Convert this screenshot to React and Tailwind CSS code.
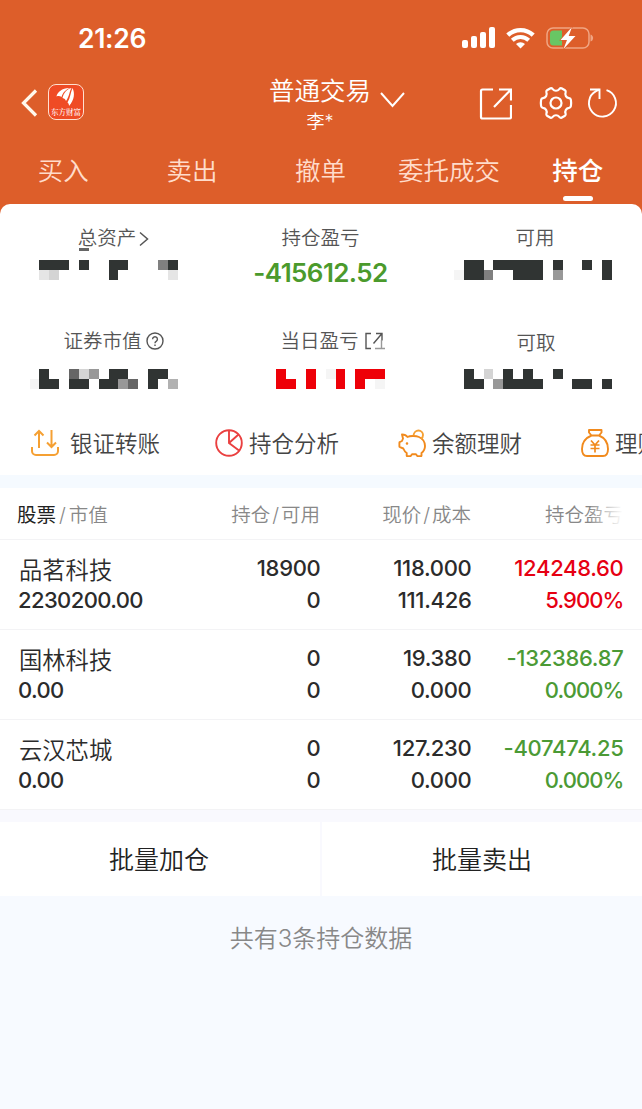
import React from 'react'

const CELL = 9.87

const SHADES = {
  '#': '#303433',
  R: '#ee0008',
  a: '#f5f5f5',
  b: '#e5e5e5',
  c: '#d4d4d4',
  d: '#b1b1b1',
  e: '#989898',
  f: '#808080',
  g: '#666666',
}

const cellX = (k) => Math.round(k * CELL)

// hidden amounts, drawn as two rows of blocks starting at grid column `start`
const Mosaic = ({ start, rows, className }) => {
  const left = cellX(start)
  const cells = []
  rows.forEach((row, y) => {
    row.split('').forEach((ch, i) => {
      if (SHADES[ch]) {
        const x = cellX(start + i)
        cells.push(
          <rect
            key={`${y}-${i}`}
            x={x - left}
            y={y * 10}
            width={cellX(start + i + 1) - x}
            height="10"
            fill={SHADES[ch]}
          />
        )
      }
    })
  })
  return (
    <svg width="160" height="20" shapeRendering="crispEdges" className={`block shrink-0 ${className}`}>
      {cells}
    </svg>
  )
}

const StatusBar = () => (
  <div className="flex h-[76px] items-center justify-between pl-[78px] pr-[48px] text-white">
    <span className="pt-px text-[26.500px] leading-none font-semibold tracking-[-0.3px]">21:26</span>
    <div className="flex items-center">
      <svg width="34" height="22" viewBox="0 0 34 22" fill="#fff">
        <rect x="0" y="13" width="6" height="8" rx="2" />
        <rect x="9" y="9" width="6" height="12" rx="2" />
        <rect x="18" y="5" width="6" height="16" rx="2" />
        <rect x="27" y="0" width="6" height="21" rx="2" />
      </svg>
      <svg width="30" height="22" viewBox="0 0 30 22" fill="none" stroke="#fff" strokeWidth="4.400" className="ml-[10px]">
        <path d="M1.800 8.200a18.300 18.300 0 0 1 25.400 0" />
        <path d="M6.300 13.200a11.800 11.800 0 0 1 16.400 0" strokeWidth="4" />
        <path d="M14.500 21.500l-4.500-4.400a6.400 6.400 0 0 1 9 0z" fill="#fff" stroke="none" />
      </svg>
      <svg width="48" height="22" viewBox="0 0 48 22" className="ml-[10px]">
        <rect x="1" y="1" width="42" height="20" rx="6" fill="none" stroke="#f0a583" strokeWidth="1.500" />
        <path d="M44.500 7.500c3.500 1 3.500 6 0 7z" fill="#f0a583" />
        <path d="M7.500 3.500h8.500v15H7.500a3.500 3.500 0 0 1-3.500-3.500V7a3.500 3.500 0 0 1 3.500-3.500z" fill="#68c664" />
        <path d="M26 0L14.500 13h6.500L17.500 22 29.500 9h-6.800z" fill="#fff" stroke="#dd5e2a" strokeWidth="1.200" paintOrder="stroke" />
      </svg>
    </div>
  </div>
)

const NavBar = () => (
  <div className="grid h-[64px] grid-cols-[239px_162px_1fr] text-white">
    <div className="flex items-start pl-[21px] pt-[8px]">
      <svg width="17" height="28" viewBox="0 0 17 28" fill="none" stroke="#fff8ec" strokeWidth="3.200" className="mt-[5px]">
        <path d="M15 1.500L2.500 14 15 26.500" />
      </svg>
      <div className="ml-[10px] flex size-[36px] flex-col items-center rounded-[8px] border border-[#ffe0d0] bg-[#ef4b25]">
        <svg width="22" height="20" viewBox="0 0 22 20" fill="#fff" className="mt-[2px]">
          <path d="M1.500 9.500C2 5 8 .5 15 1c-4 1.500-7 4-8.500 9-1.500-1-3-1.200-5-.5z" />
          <path d="M7.500 11C8.500 6 12 2 16.500 1c-2 3-2 8-5.500 13-.5-1.600-1.500-2.500-3.500-3z" />
          <path d="M12.500 15.500c3-5 3-10 5-14.500C20 6 19.500 13 14 19c0-1.500-.3-2.500-1.500-3.500z" />
        </svg>
        <span className="font-['Noto_Serif_CJK_SC','Noto_Sans_CJK_SC',serif] text-[7.500px] leading-[10px] font-medium whitespace-nowrap">东方财富</span>
      </div>
    </div>
    <div className="flex flex-col items-center">
      <div className="relative text-[25.500px] leading-[30px] font-[350] whitespace-nowrap">
        普通交易
        <svg width="25" height="16" viewBox="0 0 25 16" fill="none" stroke="#fff" strokeWidth="2" className="absolute top-[16px] left-[111px]">
          <path d="M1 1l11.500 13L24 1" />
        </svg>
      </div>
      <div className="text-[18px] leading-[32px] font-[350]">李*</div>
    </div>
    <div className="flex items-start pl-[77px] pt-[10px]">
      <svg width="34" height="34" viewBox="0 0 34 34" fill="none" stroke="#fff" strokeWidth="2.200">
        <path d="M15 3.500H4.500A1.500 1.500 0 0 0 3 5v26a1.500 1.500 0 0 0 1.500 1.500h27A1.500 1.500 0 0 0 33 31V19M21 3.500h12v11M32.500 4L16 21" />
      </svg>
      <svg width="34" height="34" viewBox="0 0 34 34" fill="none" stroke="#fff" strokeWidth="2.200" strokeLinejoin="round" className="ml-[27px]">
        <path d="M11.500 2.200c1-.4 1.500 0 2.200.9 1.700 2.200 4.900 2.200 6.600 0 .7-.9 1.200-1.300 2.200-.9l3.500 2c.9.500.9 1.200.6 2.200-1 2.700.6 5.400 3.400 5.800 1.100.2 1.700.6 1.900 1.700.3 1.800.3 4.400 0 6.200-.2 1.100-.8 1.500-1.900 1.700-2.800.4-4.400 3.100-3.400 5.800.3 1 .3 1.700-.6 2.200l-3.500 2c-1 .4-1.500 0-2.200-.9-1.700-2.200-4.900-2.200-6.600 0-.7.9-1.200 1.300-2.200.9l-3.500-2c-.9-.5-.9-1.200-.6-2.200 1-2.700-.6-5.400-3.400-5.800-1.100-.2-1.700-.6-1.900-1.700-.3-1.800-.3-4.400 0-6.200.2-1.100.8-1.500 1.900-1.700 2.800-.4 4.400-3.100 3.400-5.800-.3-1-.3-1.700.6-2.200z" />
        <circle cx="17" cy="17" r="5.500" />
      </svg>
      <svg width="32" height="34" viewBox="0 0 32 34" fill="none" stroke="#fff" strokeWidth="1.900" className="ml-[14px]">
        <path d="M19.500 4.200A13.500 13.500 0 1 1 9 5.200l3-1.500" />
        <path d="M3 3.500h9.500v9.500" />
      </svg>
    </div>
  </div>
)

const tabs = ['买入', '卖出', '撤单', '委托成交', '持仓']

const Tabs = () => (
  <div className="-ml-px grid h-[64px] grid-cols-5 text-[25.500px] leading-[61px] text-[#ffdccb]">
    {tabs.map((tab) =>
      tab === '持仓' ? (
        <div key={tab} className="relative text-center font-medium text-white">
          {tab}
          <span className="absolute top-[56px] left-1/2 h-[5px] w-[30px] -translate-x-1/2 rounded-full bg-white" />
        </div>
      ) : (
        <div key={tab} className="text-center font-[350] whitespace-nowrap">{tab}</div>
      )
    )}
  </div>
)

const label = 'flex h-[28px] items-center justify-center text-[19.500px] font-[350] text-[#555]'

const Summary = () => (
  <div className="grid h-[204px] grid-cols-[227px_186px_229px] grid-rows-[109px_94px] pt-[21px]">
    <div>
      <div className={label}>
        <span className="relative">
          总资产
          <span className="absolute top-[24px] left-px h-[3px] w-[10px] bg-[#666]" />
        </span>
        <svg width="10" height="16" viewBox="0 0 10 16" fill="none" stroke="#555" strokeWidth="1.500" className="ml-[3px]">
          <path d="M1 1.500L8.500 8 1 14.500" />
        </svg>
      </div>
      <Mosaic start={4} rows={['### #  ##   f#', 'bc     #     b']} className="mt-[7px] ml-[39px]" />
    </div>
    <div>
      <div className={`${label} pl-px`}>持仓盈亏</div>
      <div className="mt-[6px] pl-px text-center text-[26px] leading-[28px] font-semibold tracking-[-0.6px] whitespace-nowrap text-[#4b9a2c]">-415612.52</div>
    </div>
    <div>
      <div className={`${label} pl-[15px]`}>可用</div>
      <Mosaic start={46} rows={[' ## ##### #  # #', 'a##f  ### e    #']} className="mt-[7px] ml-[41px]" />
    </div>
    <div className="-mt-[6px]">
      <div className={label}>
        证券市值
        <svg width="18" height="18" viewBox="0 0 18 18" fill="none" stroke="#555" strokeWidth="1.400" className="-mt-[2px] ml-[4px]">
          <circle cx="9" cy="9" r="8" />
          <path d="M6.600 7.200a2.400 2.400 0 1 1 3.600 2.100c-.8.500-1.200.9-1.200 1.900M9 12.500v1.500" />
        </svg>
      </div>
      <Mosaic start={3} rows={[' #  gce ##  ##', 'a## ## ##eg # d']} className="mt-[13px] ml-[30px]" />
    </div>
    <div className="-mt-[6px]">
      <div className={`${label} pl-[25px]`}>
        当日盈亏
        <svg width="20" height="18" viewBox="0 0 20 18" fill="none" stroke="#555" strokeWidth="1.400" className="-mt-[2px] ml-[6px]">
          <path d="M6 1.500H1v15h5M11 1.500h6v7M17 1.500L8.500 11.500" />
          <path d="M10 16.500h10M16.500 8v8" stroke="#999" />
        </svg>
      </div>
      <Mosaic start={28} rows={['R  R aR RRR', 'RR R  R R a']} className="mt-[13px] ml-[49px]" />
    </div>
    <div className="-mt-[6px]">
      <div className={`${label} relative top-[2px] pl-[17px]`}>可取</div>
      <Mosaic start={47} rows={['# c # #  #', '## e####   ## #']} className="mt-[13px] ml-[51px]" />
    </div>
  </div>
)

const TransferIcon = () => (
  <svg width="28" height="28" viewBox="0 0 28 28" fill="none" stroke="#f5a033" strokeWidth="2" className="shrink-0">
    <path d="M1 18v4a4 4 0 0 0 4 4h18a4 4 0 0 0 4-4v-4M8 19V2M3.500 6.500L8 2l4.500 4.500M20.500 1v17M16 13.500l4.500 4.500 4.500-4.500" />
  </svg>
)

const PieIcon = () => (
  <svg width="28" height="28" viewBox="0 0 28 28" fill="none" stroke="#ea4040" strokeWidth="1.900" className="shrink-0">
    <circle cx="14" cy="14" r="12.800" />
    <path d="M14 1v13l10 7.500M14 14l9.500-8.500" />
  </svg>
)

const PiggyIcon = () => (
  <svg width="28" height="28" viewBox="0 0 28 28" fill="none" stroke="#f18a1d" strokeWidth="1.900" strokeLinejoin="round" className="shrink-0">
    <path d="M4 5.500c2.500 0 4.500 1 5.500 2.500 2-1 8-1.500 11.500 0 3.800 1.700 6 5 6 9 0 3-1.500 5.500-3.500 7v2.500a.8.800 0 0 1-.8.800h-3.200l-1.500-2h-4l-1.500 2H9.500a.8.800 0 0 1-.8-.8V24c-1.700-1.200-2.700-2.700-3.400-4.500L2 18.200a.8.800 0 0 1-.6-.8v-3.600c0-.4.200-.7.600-.8L4 12l1-2.500z" />
    <path d="M15.500 6.500c.3-3 2.500-5 5-5s4.500 2 4.500 4.500c0 1.500-.7 3-2 4" stroke="#f5a033" />
    <circle cx="9" cy="14.500" r=".7" fill="#f18a1d" strokeWidth="1.200" />
  </svg>
)

const BagIcon = () => (
  <svg width="28" height="28" viewBox="0 0 28 28" fill="none" stroke="#f18a1d" strokeWidth="1.900" strokeLinejoin="round" className="shrink-0">
    <path d="M8 1h12.500v2.500L18 6.500h-7.500L8 3.500zM10.500 6.500C4.500 9 1 14 1 20c0 4.500 1.500 7 5 7h16c3.500 0 5-2.500 5-7 0-6-3-11-9-13.500" />
    <path d="M10 11.500l4 4.500 4-4.500M9.500 16h9M9.500 19.500h9M14 16v7.500" strokeWidth="1.700" />
  </svg>
)

const Actions = () => (
  <div className="flex h-[67px] items-center overflow-hidden pt-[3px] pl-[31px] text-[22.500px] font-[350] whitespace-nowrap text-[#444]">
    <div className="flex w-[184px] shrink-0 items-center gap-[11px]">
      <TransferIcon />
      <span className="pt-[2px]">银证转账</span>
    </div>
    <div className="flex w-[183px] shrink-0 items-center gap-[6px]">
      <PieIcon />
      <span className="pt-[2px]">持仓分析</span>
    </div>
    <div className="flex w-[183px] shrink-0 items-center gap-[6px]">
      <PiggyIcon />
      <span className="pt-[2px]">余额理财</span>
    </div>
    <div className="flex shrink-0 items-center gap-[6px]">
      <BagIcon />
      <span className="pt-[2px]">理财</span>
    </div>
  </div>
)

const holdings = [
  { name: '品茗科技', value: '2230200.00', qty: '18900', usable: '0', price: '118.000', cost: '111.426', profit: '124248.60', rate: '5.900%', up: true },
  { name: '国林科技', value: '0.00', qty: '0', usable: '0', price: '19.380', cost: '0.000', profit: '-132386.87', rate: '0.000%', up: false },
  { name: '云汉芯城', value: '0.00', qty: '0', usable: '0', price: '127.230', cost: '0.000', profit: '-407474.25', rate: '0.000%', up: false },
]

const Holdings = () => (
  <div className="bg-white">
    <div className="grid h-[52px] grid-cols-[170px_150px_151px_152px] items-center border-b border-[#f3f3f5] pt-[4px] text-right text-[19.500px] font-[350] text-[#888]">
      <div className="flex gap-[3px] pl-[17px] text-left">
        <span className="font-normal text-[#222]">股票</span>
        <span>/</span>
        <span>市值</span>
      </div>
      <div className="flex justify-end gap-[2px]"><span>持仓</span><span>/</span><span>可用</span></div>
      <div className="flex justify-end gap-[2px]"><span>现价</span><span>/</span><span>成本</span></div>
      <div className="relative">
        持仓盈亏
        <span className="absolute inset-y-0 right-0 w-[32px] bg-linear-to-r from-white/10 to-white" />
      </div>
    </div>
    {holdings.map((item) => (
      <div key={item.name} className="grid h-[90px] grid-cols-[170px_150.500px_151px_152px] border-b border-[#f3f3f5] pt-[12px] text-right text-[22px] leading-[32px] font-medium tracking-[-0.3px] text-[#2b2b2b]">
        <div className="pl-[18px] text-left">
          <div className="relative top-[3px] left-px text-[23.300px] font-[350] tracking-normal">{item.name}</div>
          <div className="tracking-[-0.6px]">{item.value}</div>
        </div>
        <div>
          <div>{item.qty}</div>
          <div>{item.usable}</div>
        </div>
        <div>
          <div>{item.price}</div>
          <div>{item.cost}</div>
        </div>
        <div className={item.up ? 'text-[#e60012]' : 'text-[#4b9a35]'}>
          <div>{item.profit}</div>
          <div className="tracking-[-0.9px]">{item.rate}</div>
        </div>
      </div>
    ))}
  </div>
)

const App = () => {
  return (
    <div className="h-[1109px] w-[642px] overflow-hidden bg-[#f7faff] font-['Inter','Noto_Sans_CJK_SC',sans-serif]">
      <div className="h-[214px] bg-[#dd5e2a]">
        <StatusBar />
        <NavBar />
        <Tabs />
      </div>
      <div className="-mt-[10px] h-[271px] rounded-t-[10px] bg-white">
        <Summary />
        <Actions />
      </div>
      <div className="h-[13px] bg-[#f5faff]" />
      <Holdings />
      <div className="h-[12px] bg-[#f9f9fe]" />
      <div className="grid h-[74px] grid-cols-[320px_320px] gap-[2px] bg-[#f9f9fe] text-center text-[25px] font-[350] text-[#222]">
        <div className="bg-white pt-[3px] pr-[2px] leading-[71px]">批量加仓</div>
        <div className="bg-white pt-[3px] leading-[71px]">批量卖出</div>
      </div>
      <div className="mt-[26px] text-center text-[24px] leading-[34px] font-[350] text-[#888]">共有3条持仓数据</div>
    </div>
  )
}

export default App
